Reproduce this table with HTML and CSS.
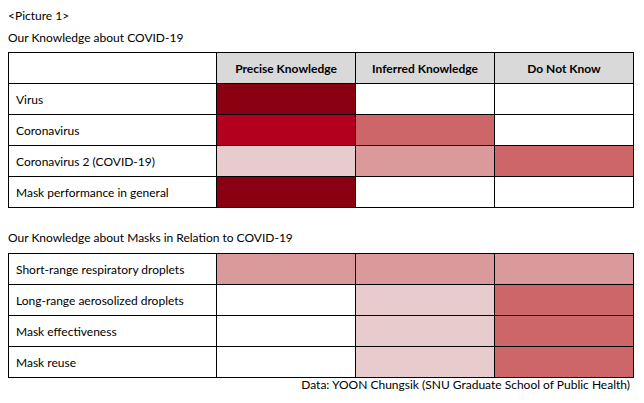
FILE: index.html
```html
<!DOCTYPE html>
<html>
<head>
<meta charset="utf-8">
<link rel="stylesheet" href="styles.css">
</head>
<body>
<div class="page">
  <div class="label">&lt;Picture 1&gt;</div>
  <div class="title t1">Our Knowledge about COVID-19</div>
  <table class="grid g1">
    <colgroup><col class="c-name"><col class="c-v"><col class="c-v"><col class="c-v"></colgroup>
    <tr class="head"><th class="blank"></th><th>Precise Knowledge</th><th>Inferred Knowledge</th><th>Do Not Know</th></tr>
    <tr><td class="name">Virus</td><td class="dark"></td><td></td><td></td></tr>
    <tr><td class="name">Coronavirus</td><td class="bright"></td><td class="mid"></td><td></td></tr>
    <tr><td class="name">Coronavirus 2 (COVID-19)</td><td class="pale"></td><td class="light"></td><td class="mid"></td></tr>
    <tr><td class="name">Mask performance in general</td><td class="dark"></td><td></td><td></td></tr>
  </table>
  <div class="title t2">Our Knowledge about Masks in Relation to COVID-19</div>
  <table class="grid g2">
    <colgroup><col class="c-name"><col class="c-v"><col class="c-v"><col class="c-v"></colgroup>
    <tr><td class="name">Short-range respiratory droplets</td><td class="light"></td><td class="light"></td><td class="light"></td></tr>
    <tr><td class="name">Long-range aerosolized droplets</td><td></td><td class="pale"></td><td class="mid"></td></tr>
    <tr><td class="name">Mask effectiveness</td><td></td><td class="pale"></td><td class="mid"></td></tr>
    <tr><td class="name">Mask reuse</td><td></td><td class="pale"></td><td class="mid"></td></tr>
  </table>
  <div class="source">Data: YOON Chungsik (SNU Graduate School of Public Health)</div>
</div>
</body>
</html>
```
FILE: styles.css
```css
html, body {
  margin: 0;
  padding: 0;
  background: #ffffff;
}
.page {
  padding: 6px 0 0 8px;
  width: 626px;
  font-family: "Lato", "Open Sans", sans-serif;
  font-size: 12px;
  color: #000;
}
.label, .title {
  height: 20px;
  line-height: 20px;
}
.t1 { margin-top: 2px; }
.t2 { margin-top: 20px; }
.grid {
  border-collapse: collapse;
  table-layout: fixed;
  width: 626px;
}
.g1 { margin-top: 4px; }
.g2 { margin-top: 5px; }
.c-name { width: 208px; }
.c-v { width: 139px; }
.grid th, .grid td {
  border: 1.5px solid #000;
  height: 30px;
  padding: 0 0 0 7px;
  text-align: left;
  font-weight: normal;
}
.grid th {
  background: #d9d9d9;
  font-weight: bold;
  text-align: center;
  padding: 0;
}
.grid th.blank { background: #ffffff; }
.dark { background: #8a0012; }
.bright { background: #b3001e; }
.mid { background: #cc6669; }
.light { background: #da9a9b; }
.pale { background: #e8cbcc; }
.source {
  height: 14px;
  line-height: 14px;
  text-align: right;
  padding-right: 4px;
}
```
